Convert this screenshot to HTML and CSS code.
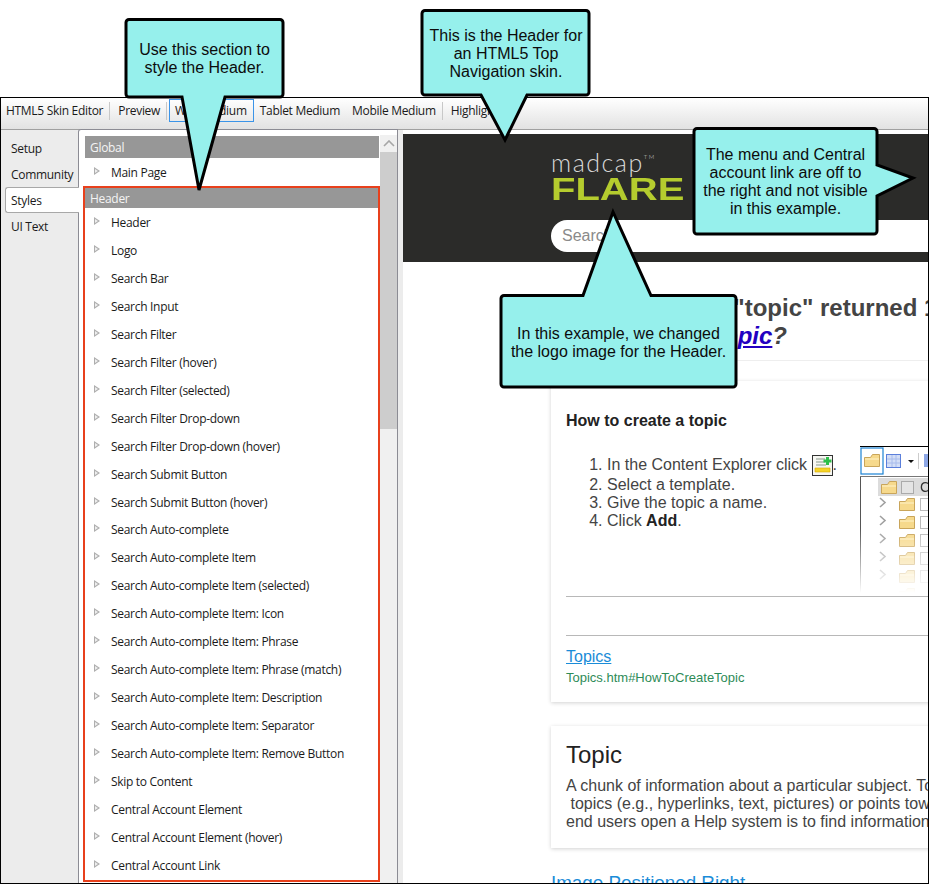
FILE: index.html
```html
<!DOCTYPE html>
<html lang="en">
  <head>
    <meta charset="UTF-8" />
    <title>HTML5 Skin Editor</title>
    <link rel="stylesheet" href="styles.css">
  </head>
  <body>
    <div class="window">
      <div class="toolbar">
        <span class="tool">HTML5 Skin Editor</span>
        <span class="tool-sep"></span>
        <span class="tool">Preview</span>
        <span class="tool-sep tool-sep-tight"></span>
        <span class="tool tool-active">Web Medium</span>
        <span class="tool tool-tablet">Tablet Medium</span>
        <span class="tool">Mobile Medium</span>
        <span class="tool-sep"></span>
        <span class="tool">Highlight</span>
      </div>

      <div class="editor">
        <div class="tabs">
          <div class="tab">Setup</div>
          <div class="tab">Community</div>
          <div class="tab tab-active">Styles</div>
          <div class="tab">UI Text</div>
        </div>

        <div class="styles-panel">
          <div class="style-list">
            <div class="group-head">Global</div>
            <div class="style-row style-row-first">Main Page</div>
            <div class="header-group">
              <div class="group-head">Header</div>
              <div class="style-row">Header</div>
              <div class="style-row">Logo</div>
              <div class="style-row">Search Bar</div>
              <div class="style-row">Search Input</div>
              <div class="style-row">Search Filter</div>
              <div class="style-row">Search Filter (hover)</div>
              <div class="style-row">Search Filter (selected)</div>
              <div class="style-row">Search Filter Drop-down</div>
              <div class="style-row">Search Filter Drop-down (hover)</div>
              <div class="style-row">Search Submit Button</div>
              <div class="style-row">Search Submit Button (hover)</div>
              <div class="style-row">Search Auto-complete</div>
              <div class="style-row">Search Auto-complete Item</div>
              <div class="style-row">Search Auto-complete Item (selected)</div>
              <div class="style-row">Search Auto-complete Item: Icon</div>
              <div class="style-row">Search Auto-complete Item: Phrase</div>
              <div class="style-row">Search Auto-complete Item: Phrase (match)</div>
              <div class="style-row">Search Auto-complete Item: Description</div>
              <div class="style-row">Search Auto-complete Item: Separator</div>
              <div class="style-row">Search Auto-complete Item: Remove Button</div>
              <div class="style-row">Skip to Content</div>
              <div class="style-row">Central Account Element</div>
              <div class="style-row">Central Account Element (hover)</div>
              <div class="style-row">Central Account Link</div>
            </div>
          </div>
          <div class="scrollbar">
            <div class="scroll-up">
              <svg width="12" height="7" viewBox="0 0 12 7"><path d="M1 6 L6 1 L11 6" fill="none" stroke="#a6a6a6" stroke-width="1.6" /></svg>
            </div>
            <div class="scroll-thumb"></div>
          </div>
        </div>

        <div class="preview">
          <div class="site-header">
            <div class="logo">
              <div class="logo-top">madcap<sup>TM</sup></div>
              <div class="logo-name">FLARE</div>
            </div>
            <div class="search-pill">Search</div>
          </div>

          <div class="results">
            <h1 class="results-title">Your search for "topic" returned 1 result.<br /><em>Did you mean <a href="#">topic</a>?</em></h1>
            <div class="results-rule"></div>

            <div class="card">
              <h2 class="card-title">How to create a topic</h2>
              <div class="howto">
                <ol class="steps">
                  <li>In the Content Explorer click
                    <svg class="new-icon" width="21" height="21" viewBox="0 0 21 21">
                      <rect x="0.5" y="0.5" width="20" height="20" fill="#f7f7f2" stroke="#333" />
                      <path d="M4 4h9M4 7h9M4 10h10" stroke="#8a9a8a" stroke-width="1.2" />
                      <path d="M3 13h15v4H3z" fill="#f5d428" stroke="#d9a900" stroke-width="0.6" />
                      <path d="M14 2h3v2.500h2.500v3H17V10h-3V7.500h-2.500v-3H14z" fill="#2fbf4a" />
                    </svg>.</li>
                  <li>Select a template.</li>
                  <li>Give the topic a name.</li>
                  <li>Click <b>Add</b>.</li>
                </ol>
                <div class="explorer-shot">
                  <svg width="70" height="150" viewBox="0 0 70 150">
                    <defs>
                      <g id="folder">
                        <path d="M0.500 3.500h6l2-3h7v12h-15z" fill="#f6d98c" stroke="#c9a55a" />
                        <path d="M1 5h14" stroke="#fff3c9" />
                      </g>
                      <path id="chev" d="M0 0 L5 4.500 L0 9" fill="none" stroke="#a0a0a0" stroke-width="1.600" />
                    </defs>
                    <rect x="1" y="1" width="22" height="26" fill="#fff" stroke="#1b83d4" stroke-width="1.200" />
                    <use href="#folder" x="4" y="7" />
                    <rect x="26.500" y="7.500" width="14" height="13" fill="#d3def6" stroke="#5b7fdb" />
                    <path d="M27 12h13M27 16h13M32 8v12M36 8v12" stroke="#a8bcec" />
                    <path d="M48 13h6l-3 3z" fill="#111" />
                    <path d="M58.500 6v16" stroke="#ccc" />
                    <rect x="64" y="7" width="8" height="13" fill="#8ea8e6" />
                    <path d="M0 29.500h70" stroke="#777" />
                    <path d="M0.500 30v120" stroke="#555" />
                    <rect x="18" y="31" width="52" height="18" fill="#dcdcdc" />
                    <use href="#folder" x="21" y="34" />
                    <rect x="41.500" y="34.500" width="12" height="12" fill="#e4e4e4" stroke="#aaa" />
                    <text x="60" y="45" class="shot-text">C</text>
                    <use href="#chev" x="20" y="51" />
                    <use href="#folder" x="39" y="51" />
                    <rect x="60.500" y="51.500" width="12" height="12" fill="#fff" stroke="#bbb" />
                    <use href="#chev" x="20" y="69" />
                    <use href="#folder" x="39" y="69" />
                    <rect x="60.500" y="69.500" width="12" height="12" fill="#fff" stroke="#bbb" />
                    <use href="#chev" x="20" y="87" />
                    <use href="#folder" x="39" y="87" />
                    <rect x="60.500" y="87.500" width="12" height="12" fill="#fff" stroke="#bbb" />
                    <use href="#chev" x="20" y="105" />
                    <use href="#folder" x="39" y="105" />
                    <rect x="60.500" y="105.500" width="12" height="12" fill="#fff" stroke="#bbb" />
                    <use href="#chev" x="20" y="123" />
                    <use href="#folder" x="39" y="123" />
                    <rect x="60.500" y="123.500" width="12" height="12" fill="#fff" stroke="#bbb" />
                    <use href="#folder" x="39" y="141" />
                  </svg>
                </div>
              </div>
              <div class="card-rule"></div>
              <div class="card-rule card-rule-second"></div>
              <a class="result-link" href="#">Topics</a>
              <div class="result-url">Topics.htm#HowToCreateTopic</div>
            </div>

            <div class="card card-topic">
              <h2 class="topic-title">Topic</h2>
              <p class="topic-text">A chunk of information about a particular subject. Topics are the main content of a project, and
                <br />&nbsp;topics (e.g., hyperlinks, text, pictures) or points toward other topics in the output. One
                <br />end users open a Help system is to find information about a subject they need to learn.</p>
            </div>

            <a class="next-link" href="#">Image Positioned Right</a>
          </div>
        </div>
      </div>
    </div>

    <!-- callouts sit on top of the screenshot -->
    <div class="callout callout-section">
      <svg width="170" height="186" viewBox="0 0 170 186"><path d="M4 1.500H155a3 3 0 0 1 3 3V76a3 3 0 0 1-3 3H100L74 172 57 79H4a3 3 0 0 1-3-3V4.500a3 3 0 0 1 3-3z" /></svg>
      <div class="callout-text">Use this section to<br />style the Header.</div>
    </div>
    <div class="callout callout-header">
      <svg width="172" height="142" viewBox="0 0 172 142"><path d="M4 1.500H165a3 3 0 0 1 3 3V83a3 3 0 0 1-3 3H106L84 131 60 86H4a3 3 0 0 1-3-3V4.500a3 3 0 0 1 3-3z" /></svg>
      <div class="callout-text">This is the Header for<br />an HTML5 Top<br />Navigation skin.</div>
    </div>
    <div class="callout callout-menu">
      <svg width="226" height="110" viewBox="0 0 226 110"><path d="M4 1.500H181a3 3 0 0 1 3 3V38L220 51 184 69V104a3 3 0 0 1-3 3H4a3 3 0 0 1-3-3V4.500a3 3 0 0 1 3-3z" /></svg>
      <div class="callout-text">The menu and Central<br />account link are off to<br />the right and not visible<br />in this example.</div>
    </div>
    <div class="callout callout-logo">
      <svg width="238" height="182" viewBox="0 0 238 182"><path d="M4 87.500H83L113 4 151 87.500H233a3 3 0 0 1 3 3V176a3 3 0 0 1-3 3H4a3 3 0 0 1-3-3V90.500a3 3 0 0 1 3-3z" /></svg>
      <div class="callout-text">In this example, we changed<br />the logo image for the Header.</div>
    </div>
  </body>
</html>
```

FILE: styles.css
```css
* {
  margin: 0;
  padding: 0;
  box-sizing: border-box;
}

html,
body {
  height: 884px;
  overflow: hidden;
  background-color: #ffffff;
}

body {
  padding-top: 97px;
  font-family: "Open Sans", "Liberation Sans", sans-serif;
}

.window {
  height: 787px;
  display: flex;
  flex-direction: column;
  border: 1px solid #000000;
  background-color: #ececec;
}

/* toolbar */
.toolbar {
  height: 32px;
  flex-shrink: 0;
  display: flex;
  align-items: center;
  padding: 0 0 6px 5px;
  font-size: 12px;
  letter-spacing: -0.3px;
  color: #1a1a1a;
  background: linear-gradient(#ffffff, #e2e2e2);
  border-bottom: 1px solid #a0a0a0;
}

.tool {
  white-space: nowrap;
}

.tool-sep {
  width: 1px;
  height: 18px;
  margin: 0 8px 0 6px;
  background-color: #c8c8c8;
}

.tool-sep-tight {
  margin-right: 2px;
}

.tool-active {
  padding: 2px 6px 2px 5px;
  margin-right: 6px;
  border: 1px solid #3b94e8;
}

.tool-tablet {
  margin-right: 12px;
}

/* editor body */
.editor {
  flex: 1;
  min-height: 0;
  display: flex;
}

.tabs {
  width: 77px;
  flex-shrink: 0;
  padding: 5px 0 0 4px;
  font-size: 12px;
  letter-spacing: -0.3px;
  color: #1a1a1a;
}

.tab {
  height: 26px;
  line-height: 27px;
  padding-left: 6px;
  white-space: nowrap;
}

.tab-active {
  width: 74px;
  position: relative;
  z-index: 1;
  background-color: #ffffff;
  border: 1px solid #a8a8a8;
  border-right: none;
  border-radius: 3px 0 0 3px;
  padding-left: 5px;
  line-height: 25px;
}

.styles-panel {
  width: 320px;
  flex-shrink: 0;
  display: flex;
  margin-top: -1px;
  padding: 6px 0 0 6px;
  background-color: #ffffff;
  border: 1px solid #8c8c94;
  border-bottom: none;
  border-radius: 3px 0 0 0;
}

.style-list {
  width: 295px;
  flex-shrink: 0;
  font-size: 12px;
  letter-spacing: -0.3px;
  color: #1a1a1a;
}

.group-head {
  height: 22px;
  line-height: 24px;
  margin-right: 1px;
  padding-left: 5px;
  color: #f4f4f4;
  background-color: #979797;
}

.style-row {
  height: 27.96px;
  line-height: 29.96px;
  padding-left: 26px;
  position: relative;
  white-space: nowrap;
}

/* hollow expander arrow */
.style-row::before,
.style-row::after {
  content: "";
  position: absolute;
  width: 0;
  height: 0;
}

.style-row::before {
  left: 9px;
  top: 9px;
  border-left: 6px solid #aeaeae;
  border-top: 4.5px solid transparent;
  border-bottom: 4.5px solid transparent;
}

.style-row::after {
  left: 10px;
  top: 11px;
  border-left: 3px solid #eeeeee;
  border-top: 2.5px solid transparent;
  border-bottom: 2.5px solid transparent;
}

.style-row-first {
  height: 28px;
}

.header-group {
  width: 297px;
  height: 696px;
  margin-left: -2px;
  border: 2px solid #e8401c;
}

.header-group .group-head {
  height: 20px;
  line-height: 22px;
  margin-right: 0;
}

.scrollbar {
  width: 17px;
  margin-top: -1px;
  background-color: #f0f0f0;
}

.scroll-up {
  height: 17px;
  display: flex;
  align-items: center;
  justify-content: center;
}

.scroll-thumb {
  height: 277px;
  background-color: #cdcdcd;
}

/* help output preview */
.preview {
  flex: 1;
  min-width: 0;
  margin-left: 5px;
  overflow: hidden;
  background-color: #ffffff;
  font-family: "Liberation Sans", Arial, sans-serif;
  color: #444444;
}

.site-header {
  height: 128px;
  padding: 15px 0 0 148px;
  margin-top: 4px;
  background-color: #2b2b29;
}

.logo-top {
  height: 27px;
  font-family: "Lato", "Liberation Sans", sans-serif;
  font-weight: 300;
  font-size: 25px;
  line-height: 27px;
  letter-spacing: 1.5px;
  color: #d8d8d8;
}

.logo-top sup {
  font-size: 6px;
  vertical-align: 13px;
  line-height: 0;
}

.logo-name {
  height: 26px;
  font-weight: 700;
  font-size: 32px;
  line-height: 26px;
  color: #b5cc2e;
  transform: scaleX(1.25);
  transform-origin: left;
}

.search-pill {
  width: 500px;
  height: 32px;
  margin-top: 18px;
  padding-left: 11px;
  line-height: 32px;
  font-size: 16px;
  color: #8a8a8a;
  background-color: #ffffff;
  border-radius: 16px 0 0 16px;
}

.results {
  width: 800px;
  padding: 32px 0 0 148px;
}

.results-title {
  font-size: 24px;
  line-height: 28px;
  white-space: nowrap;
  color: #444444;
}

.results-title a {
  color: #2200c1;
}

.results-rule {
  height: 1px;
  margin-top: 10px;
  background-color: #eeeeee;
}

.card {
  margin-top: 20px;
  height: 321px;
  padding: 30px 15px 0;
  background-color: #ffffff;
  box-shadow: 0 1px 4px rgba(0, 0, 0, 0.18);
}

.card-title {
  font-size: 16px;
  line-height: 20px;
  color: #222222;
}

.howto {
  display: flex;
  height: 146px;
  margin-top: 15px;
  align-items: flex-start;
}

.steps {
  width: 294px;
  flex-shrink: 0;
  padding: 9px 0 0 41px;
  font-size: 16px;
  line-height: 18px;
}

.new-icon {
  vertical-align: middle;
}

.steps b {
  color: #222222;
}

.explorer-shot {
  width: 70px;
  height: 150px;
  border-top: 1px solid #000000;
  -webkit-mask-image: linear-gradient(#000 55%, transparent 98%);
  mask-image: linear-gradient(#000 55%, transparent 98%);
}

.shot-text {
  font-size: 14px;
  fill: #333333;
}

.card-rule {
  height: 1px;
  margin-top: 4px;
  background-color: #b8b8b8;
}

.card-rule-second {
  margin-top: 38px;
}

.result-link {
  display: block;
  margin-top: 11px;
  font-size: 16px;
  line-height: 20px;
  color: #1a8cd8;
}

.result-url {
  margin-top: 3px;
  font-size: 13px;
  line-height: 16px;
  color: #2e8b57;
}

.card-topic {
  margin-top: 24px;
  height: 122px;
  padding-top: 14px;
}

.topic-title {
  font-weight: 400;
  font-size: 24px;
  line-height: 30px;
  color: #222222;
}

.topic-text {
  margin-top: 7px;
  font-size: 16px;
  line-height: 18px;
  white-space: nowrap;
}

.next-link {
  display: block;
  margin-top: 25px;
  font-size: 18.8px;
  line-height: 20px;
  color: #1a8cd8;
}

/* callouts */
.callout {
  position: absolute;
  font-family: "Liberation Sans", Arial, sans-serif;
  font-size: 16px;
  line-height: 18px;
  color: #0c0c0c;
}

.callout svg {
  position: absolute;
  left: 0;
  top: 0;
  overflow: visible;
}

.callout svg path {
  fill: #96f0ec;
  stroke: #000000;
  stroke-width: 3;
  stroke-linejoin: miter;
}

.callout-text {
  position: relative;
  display: flex;
  align-items: center;
  justify-content: center;
  text-align: center;
  white-space: nowrap;
}

.callout-section {
  left: 125px;
  top: 18px;
}

.callout-section .callout-text {
  width: 159px;
  height: 81px;
}

.callout-header {
  left: 421px;
  top: 9px;
}

.callout-header .callout-text {
  width: 170px;
  height: 89px;
}

.callout-menu {
  left: 693px;
  top: 127px;
}

.callout-menu .callout-text {
  width: 185px;
  height: 110px;
}

.callout-logo {
  left: 500px;
  top: 208px;
}

.callout-logo .callout-text {
  width: 237px;
  height: 95px;
  margin-top: 87px;
}
```
